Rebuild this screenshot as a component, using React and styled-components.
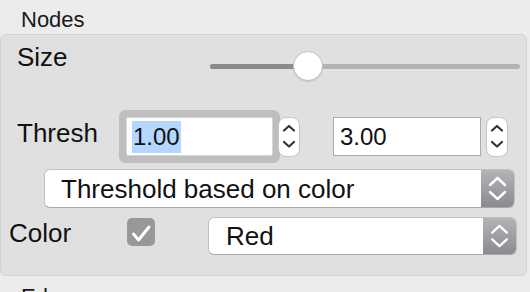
import React from 'react'
import styled, { createGlobalStyle } from 'styled-components'

const GlobalStyle = createGlobalStyle`
  html, body {
    margin: 0;
    padding: 0;
    background: #ececec;
  }
  body {
    width: 530px;
    height: 292px;
    overflow: hidden;
    font-family: "Liberation Sans", Arial, sans-serif;
    color: #111;
  }
`

const Panel = styled.div`
  display: flex;
  flex-direction: column;
`

const SectionTitle = styled.div`
  padding: 10px 0 4px 21px;
  margin-top: ${props => props.gap || 0}px;
  font-size: 22px;
  line-height: 20px;
  color: #1a1a1a;
`

const GroupBox = styled.div`
  margin-right: 3px;
  background: #e0e0e0;
  border: 1px solid #d3d3d3;
  border-radius: 6px;
  padding-bottom: 20px;
  display: flex;
  flex-direction: column;
`

const Label = styled.div`
  font-size: 26px;
  line-height: 30px;
  width: ${props => props.width ? props.width + 'px' : 'auto'};
  margin-bottom: ${props => props.lift || 0}px;
  flex-shrink: 0;
`

const SizeRow = styled.div`
  display: flex;
  align-items: flex-start;
  height: 47px;
  box-sizing: border-box;
  padding: 7px 6px 0 16px;
`

const SliderWrap = styled.div`
  position: relative;
  margin: 8px 0 0 auto;
  width: 310px;
  height: 32px;
  display: flex;
  align-items: center;
`

const Track = styled.div`
  width: 100%;
  height: 5px;
  border-radius: 3px;
  background: #b3b3b3;
  display: flex;
  overflow: hidden;
`

const TrackFill = styled.div`
  background: #8b8b8b;
  height: 100%;
`

const Thumb = styled.div`
  position: absolute;
  top: 1px;
  width: 30px;
  height: 30px;
  margin-left: -15px;
  box-sizing: border-box;
  border-radius: 50%;
  background: #fff;
  border: 1px solid #c2c2c2;
  box-shadow: 0 1px 1px rgba(0, 0, 0, 0.12);
`

const ThreshRow = styled.div`
  display: flex;
  align-items: center;
  height: 53px;
  margin-top: 28px;
  padding-left: 16px;
`

const Field = styled.div`
  width: ${props => props.width}px;
  height: 39px;
  margin-left: ${props => props.offset || 0}px;
  box-sizing: border-box;
  background: #fff;
  border: 1px solid ${props => props.focused ? '#d6d6d6' : '#ababab'};
  border-radius: ${props => props.focused ? '2px' : '0'};
  box-shadow: ${props => props.focused ? '0 0 0 7px #bebebe' : 'none'};
  padding-left: 5px;
  display: flex;
  align-items: center;
  font-size: 24px;
`

const FieldText = styled.span`
  display: inline-block;
  line-height: 32px;
  padding: 0 1px;
  background: ${props => props.selected ? '#b4d7ff' : 'transparent'};
`

const StepperBox = styled.div`
  width: 22px;
  height: 40px;
  margin-left: 5px;
  box-sizing: border-box;
  background: #fff;
  border: 1px solid #c4c4c4;
  border-radius: 8px;
  flex-shrink: 0;
  svg {
    display: block;
  }
`

const SelectBox = styled.div`
  display: flex;
  width: ${props => props.width}px;
  height: ${props => props.height}px;
  margin-left: ${props => props.offset || 0}px;
  margin-top: ${props => props.top || 0}px;
  box-sizing: border-box;
  border: 1px solid #c1c1c1;
  border-bottom-color: #a9a9a9;
  border-radius: 6px;
  background: #fff;
  overflow: hidden;
  flex-shrink: 0;
`

const SelectValue = styled.div`
  flex: 1;
  padding-left: ${props => props.indent}px;
  display: flex;
  align-items: center;
  font-size: 26px;
  padding-top: 1px;
`

const SelectArrows = styled.div`
  width: 33px;
  background: linear-gradient(#b4b4b8, #8b8b8f);
  display: flex;
  align-items: center;
  justify-content: center;
`

const ColorRow = styled.div`
  display: flex;
  align-items: center;
  height: 38px;
  margin-top: 9px;
  padding-left: 8px;
`

const CheckBox = styled.div`
  width: 28px;
  height: 28px;
  margin-bottom: 9px;
  margin-left: -1px;
  border-radius: 5px;
  background: #98989b;
  flex-shrink: 0;
  svg {
    display: block;
  }
`

function Stepper() {
  return (
    <StepperBox>
      <svg width="20" height="38" viewBox="0 0 20 38">
        <path d="M5 12.5 L10 8 L15 12.5" fill="none" stroke="#333" strokeWidth="2.2" strokeLinecap="round" strokeLinejoin="round" />
        <path d="M5 24 L10 28.5 L15 24" fill="none" stroke="#333" strokeWidth="2.2" strokeLinecap="round" strokeLinejoin="round" />
      </svg>
    </StepperBox>
  )
}

function Select({ value, width, height, offset, top, indent }) {
  return (
    <SelectBox width={width} height={height} offset={offset} top={top}>
      <SelectValue indent={indent}>{value}</SelectValue>
      <SelectArrows>
        <svg width="33" height={height - 2} viewBox="0 0 33 37">
          <path d="M9 15 L16.5 8 L24 15" fill="none" stroke="#fff" strokeWidth="2.4" strokeLinecap="round" strokeLinejoin="round" />
          <path d="M9 22 L16.5 29 L24 22" fill="none" stroke="#fff" strokeWidth="2.4" strokeLinecap="round" strokeLinejoin="round" />
        </svg>
      </SelectArrows>
    </SelectBox>
  )
}

function Slider({ value }) {
  const pct = value * 100 + '%'
  return (
    <SliderWrap>
      <Track>
        <TrackFill style={{ width: pct }} />
      </Track>
      <Thumb style={{ left: pct }} />
    </SliderWrap>
  )
}

export default function App() {
  return (
    <Panel>
      <GlobalStyle />
      <SectionTitle>Nodes</SectionTitle>
      <GroupBox>
        <SizeRow>
          <Label>Size</Label>
          <Slider value={0.316} />
        </SizeRow>
        <ThreshRow>
          <Label width={109} lift={7}>Thresh</Label>
          <Field width={147} focused>
            <FieldText selected>1.00</FieldText>
          </Field>
          <Stepper />
          <Field width={148} offset={33}>
            <FieldText>3.00</FieldText>
          </Field>
          <Stepper />
        </ThreshRow>
        <Select value="Threshold based on color" width={471} height={39} offset={43} top={6} indent={16} />
        <ColorRow>
          <Label width={119} lift={7}>Color</Label>
          <CheckBox>
            <svg width="28" height="28" viewBox="0 0 28 28">
              <path d="M6.5 16 L11.5 22 L22 9" fill="none" stroke="#fff" strokeWidth="3" strokeLinecap="round" strokeLinejoin="round" />
            </svg>
          </CheckBox>
          <Select value="Red" width={309} height={38} offset={53} indent={17} />
        </ColorRow>
      </GroupBox>
      <SectionTitle gap={1}>Edges</SectionTitle>
    </Panel>
  )
}
